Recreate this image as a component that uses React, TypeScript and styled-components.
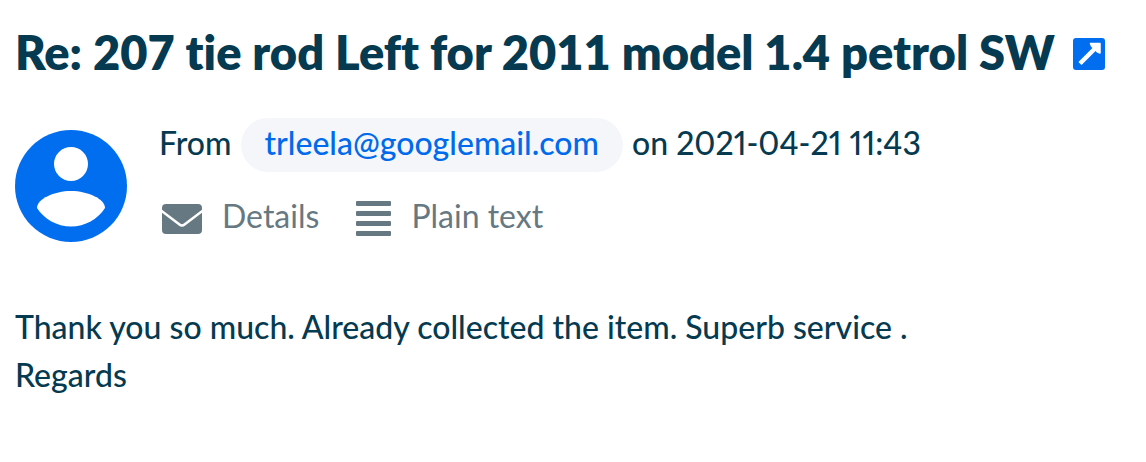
import React from "react";
import styled, { createGlobalStyle } from "styled-components";

const Global = createGlobalStyle`
  * { box-sizing: border-box; }
  body {
    margin: 0; background: #fff; color: #053a50;
    font: 500 32px/48px Lato, "Liberation Sans", sans-serif;
    font-variant-ligatures: none;
    font-variant-numeric: proportional-nums;
  }
`;
const Message = styled.main`padding: 24px 15px;`;
const Title = styled.h1`
  margin: 0; display: flex; align-items: center; gap: 18px;
  font-size: 47px; font-weight: 800; line-height: 56px; white-space: nowrap;
  font-variant-numeric: tabular-nums;
`;
const OpenLink = styled.a`display: flex; padding-top: 4px;`;
const Header = styled.header`display: flex; gap: 32px; margin-top: 38px;`;
const Avatar = styled.svg`flex: none; margin-top: 12px;`;
const Info = styled.div`display: flex; flex-direction: column; gap: 20px;`;
const Sender = styled.div`display: flex; align-items: baseline; gap: 9px; white-space: nowrap;`;
const Address = styled.a`
  padding: 1px 24px 5px; border-radius: 27px; background: #f4f6fa; color: #006aec;
  line-height: 48px; text-decoration: none;
`;
const Actions = styled.div`display: flex; gap: 34px;`;
const Action = styled.button`
  display: flex; align-items: center; gap: 20px; padding: 0; border: 0;
  background: none; color: #667982; font: inherit; font-weight: 400;
  font-variant-ligatures: none; cursor: pointer;
  svg { margin: 6px 0 0 3px; }
`;
const Body = styled.p`margin: 61px 0 0;`;

export default function App() {
  return (
    <Message>
      <Global />
      <Title>
        <span>Re: 207 tie rod Left for 2011 model 1.4 petrol SW</span>
        <OpenLink href="#" aria-label="Open message">
          <svg width="32" height="32" viewBox="0 0 32 32">
            <rect width="32" height="32" rx="3" fill="#006eee" />
            <path d="M7 25.500L22 10.500" stroke="#fff" strokeWidth="4.500" />
            <path d="M17.500 5.500h9.500v9.500l-2.500-1-6-6z" fill="#fff" stroke="#fff" strokeWidth="1.500" strokeLinejoin="round" />
          </svg>
        </OpenLink>
      </Title>
      <Header>
        <Avatar width="112" height="112" viewBox="0 0 112 112" aria-hidden="true">
          <circle cx="56" cy="56" r="56" fill="#006eee" />
          <circle cx="56" cy="34" r="17" fill="#fff" />
          <path d="M22 78c0-9 17-17 34-17s34 8 34 17c-7 11-20 18.500-34 18.500S29 89 22 78z" fill="#fff" />
        </Avatar>
        <Info>
          <Sender>
            <span>From</span>
            <Address href="mailto:trleela@googlemail.com">trleela@googlemail.com</Address>
            <span>on 2021-04-21 11:43</span>
          </Sender>
          <Actions>
            <Action type="button">
              <svg width="40" height="30" viewBox="0 0 40 30" aria-hidden="true">
                <rect width="40" height="30" rx="4" fill="currentColor" />
                <path d="M-1 6.500L17.500 20.500q2.500 2 5 0L41 6.500" fill="none" stroke="#fff" strokeWidth="2.500" />
              </svg>
              Details
            </Action>
            <Action type="button">
              <svg width="35" height="36" viewBox="0 0 35 36" aria-hidden="true">
                <g fill="currentColor">
                  <rect y="0" width="35" height="5" rx="1" />
                  <rect y="10" width="35" height="5" rx="1" />
                  <rect y="20" width="35" height="5" rx="1" />
                  <rect y="30" width="35" height="5" rx="1" />
                </g>
              </svg>
              Plain text
            </Action>
          </Actions>
        </Info>
      </Header>
      <Body>
        Thank you so much. Already collected the item. Superb service .<br />
        Regards
      </Body>
    </Message>
  );
}
